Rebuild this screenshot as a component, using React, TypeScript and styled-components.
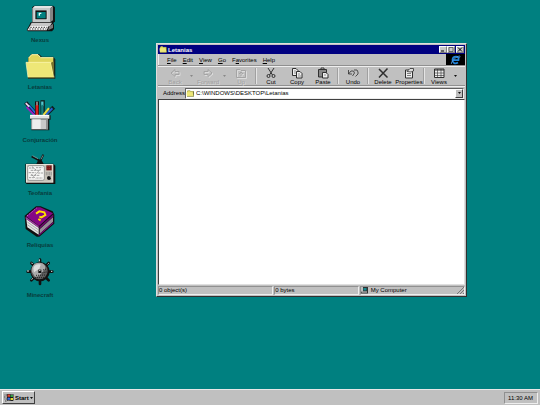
import React from "react";
import styled, { createGlobalStyle, css } from "styled-components";

const GlobalStyle = createGlobalStyle`
  * { box-sizing: border-box; }
  body {
    margin: 0;
    background: #008080;
    color: #000;
    font-family: "Liberation Sans", Arial, sans-serif;
    font-size: 6px;
    line-height: 8px;
  }
  button { font: inherit; color: inherit; background: none; border: 0; padding: 0; margin: 0; }
  svg { display: block; flex: none; }
`;

const raised = css`
  border: 1px solid;
  border-color: #fff #404040 #404040 #fff;
`;
const sunken = css`
  border: 1px solid;
  border-color: #909090 #eee #eee #909090;
`;

const Screen = styled.div`
  position: relative;
  height: 100vh;
  display: flex;
  flex-direction: column;
  overflow: hidden;
`;
const Desktop = styled.main`
  flex: 1;
  min-height: 0;
  padding: 5px 10px;
`;
const Shortcuts = styled.nav`
  display: flex;
  flex-direction: column;
  gap: 8px;
  width: 60px;
`;
const Shortcut = styled.a`
  display: flex;
  flex-direction: column;
  align-items: center;
  gap: 2px;
  color: #083c3c;
  font-size: 6px;
  font-weight: bold;
  line-height: 10px;
  text-decoration: none;
`;
const Window = styled.section`
  position: absolute;
  left: 156px;
  top: 43px;
  width: 311px;
  height: 254px;
  display: flex;
  flex-direction: column;
  padding: 1px;
  background: #c0c0c0;
  border: 1px solid;
  border-color: #dfdfdf #303030 #303030 #dfdfdf;
`;
const TitleBar = styled.header`
  display: flex;
  align-items: center;
  gap: 1px;
  height: 9px;
  padding: 0 1px;
  background: #000080;
  color: #fff;
  font-weight: bold;
`;
const Title = styled.h1`
  flex: 1;
  margin: 0;
  font-size: 6px;
`;
const Controls = styled.div`
  display: flex;
`;
const ControlButton = styled.button<{ $apart?: boolean }>`
  border: 1px solid;
  border-color: #fff #808080 #808080 #fff;
  width: 8px;
  height: 7px;
  margin-left: ${(p) => (p.$apart ? 1 : 0)}px;
  background: #c8c8c8;
`;
const MenuRow = styled.div`
  display: flex;
  height: 12px;
  border-bottom: 1px solid #909090;
`;
const Menu = styled.nav`
  flex: 1;
  display: flex;
  align-items: center;
  gap: 6px;
  padding-left: 8px;
  border-left: 1px solid #eee;
`;
const Throbber = styled.div`
  display: flex;
  align-items: center;
  justify-content: center;
  width: 19px;
  background: #000;
`;
const Toolbar = styled.div`
  display: flex;
  align-items: stretch;
  height: 20px;
  padding-left: 4px;
  border-top: 1px solid #eee;
  border-bottom: 1px solid #909090;
`;
const Tool = styled.button`
  display: flex;
  flex-direction: column;
  align-items: center;
  width: 26px;
  color: #000;
  line-height: 6px;
  &:disabled { color: #a0a0a0; text-shadow: 1px 1px 0 #d8d8d8; }
`;
const DropArrow = styled.button`
  display: flex;
  align-items: center;
  justify-content: center;
  width: 7px;
`;
const Divider = styled.span`
  width: 2px;
  margin: 1px;
  border-left: 1px solid #a0a0a0;
  border-right: 1px solid #e4e4e4;
`;
const AddressBar = styled.div`
  display: flex;
  align-items: center;
  height: 13px;
  padding: 0 1px 0 5px;
  border-top: 1px solid #eee;
`;
const AddressField = styled.div`
  border: 1px solid;
  border-color: #606060 #eee #eee #606060;
  flex: 1;
  display: flex;
  align-items: center;
  gap: 2px;
  height: 11px;
  background: #fff;
`;
const AddressInput = styled.input`
  flex: 1;
  min-width: 0;
  height: 8px;
  padding: 0;
  border: 0;
  outline: 0;
  background: none;
  font: inherit;
  color: #000;
`;
const AddressDrop = styled.button`
  ${raised}
  display: flex;
  align-items: center;
  justify-content: center;
  width: 8px;
  height: 9px;
  background: #c0c0c0;
`;
const FileArea = styled.div`
  flex: 1;
  background: #fff;
  border: 1px solid;
  border-color: #404040 #dfdfdf #dfdfdf #404040;
`;
const StatusBar = styled.footer`
  display: grid;
  grid-template-columns: 116fr 85fr 106fr;
  gap: 1px;
  height: 10px;
  padding-top: 1px;
`;
const StatusCell = styled.div`
  ${sunken}
  display: flex;
  align-items: center;
  gap: 2px;
  line-height: 7px;
`;
const Grip = styled.svg`
  margin-left: auto;
`;
const Taskbar = styled.footer`
  display: flex;
  align-items: center;
  justify-content: space-between;
  height: 16px;
  padding: 1px 2px;
  background: #c0c0c0;
  border-top: 1px solid #e8e8e8;
`;
const StartButton = styled.button`
  ${raised}
  display: flex;
  align-items: center;
  gap: 1px;
  height: 13px;
  padding: 0 1px;
  font-weight: bold;
`;
const Clock = styled.time`
  ${sunken}
  padding: 0 4px 0 3px;
  line-height: 10px;
`;

const ComputerIcon = () => (
  <svg width="32" height="28" viewBox="72 15 96 84" aria-hidden="true">
    <path d="M102 17H160L165 22V64L158 72H96V22Z" fill="#101818" />
    <path d="M98 24L104 18H158L152 24V65H98Z" fill="#e4e4e4" />
    <path d="M150 25L159 19V61L150 67Z" fill="#858585" />
    <path d="M98 24H150V66H98Z" fill="#c4c8c8" />
    <path d="M104 30H142V60H104Z" fill="#eee" />
    <path d="M106 31H140V58H106Z" fill="#101010" />
    <path d="M110 36H137V55H110Z" fill="#008080" />
    <path d="M116 38H124V42H120V47H116Z" fill="#e0ffff" />
    <path d="M92 67H158L162 74V87L156 94H84L80 90L88 76Z" fill="#101010" />
    <path d="M95 68H156L150 78H90Z" fill="#c8c8c8" />
    <path d="M90 78H146L140 91H82Z" fill="#f2f2f2" />
    <path d="M148 78L159 72V84L144 91Z" fill="#777" />
    <path d="M91 82H142M88 87H139" stroke="#333" strokeWidth="3" strokeDasharray="4 4" />
  </svg>
);

const FolderIcon = ({ width = 32, height = 27 }: { width?: number; height?: number }) => (
  <svg width={width} height={height} viewBox="72 159 96 81" aria-hidden="true">
    <path d="M84 174L94 162H117L126 170H160L166 178V236H84Z" fill="#182820" />
    <path d="M85 174L94 164H114L122 173H160V232H85Z" fill="#dfd65c" />
    <path d="M86 174L95 164H114L122 173H160" fill="none" stroke="#fffbb0" strokeWidth="3" />
    <path d="M78 187H152L162 232H84Z" fill="#eee777" stroke="#fffcc0" strokeWidth="2" />
    <path d="M153 188L162 232V184" fill="#77722d" />
    <path d="M84 233H163" stroke="#77722d" strokeWidth="3" />
  </svg>
);

const PencilCupIcon = () => (
  <svg width="32" height="33" viewBox="72 15 96 99" aria-hidden="true">
    <g strokeLinecap="square">
      <path d="M81 27L108 57" stroke="#101828" strokeWidth="12" />
      <path d="M82 38L102 59" stroke="#9820c0" strokeWidth="6" />
      <path d="M89 33L108 56" stroke="#2468e0" strokeWidth="5" />
      <path d="M79 26L86 33" stroke="#e8d8e8" strokeWidth="5" />
      <path d="M111 25V57" stroke="#181010" strokeWidth="12" />
      <path d="M111 34V57" stroke="#d82020" strokeWidth="8" />
      <path d="M111 22V29" stroke="#b4b4b4" strokeWidth="4" />
      <path d="M128 22V57" stroke="#102020" strokeWidth="13" />
      <path d="M127 23V30" stroke="#50c8d0" strokeWidth="7" />
      <path d="M127 33V56" stroke="#168080" strokeWidth="7" />
      <path d="M157 41L135 62" stroke="#102020" strokeWidth="12" />
      <path d="M155 42L140 57" stroke="#2460d0" strokeWidth="6" />
      <path d="M145 42L132 58" stroke="#e8d840" strokeWidth="6" />
    </g>
    <path d="M90 61H152V74H148V106H94V74H90Z" fill="#171f1f" />
    <path d="M90 60H148V71H90Z" fill="#e2e2e2" />
    <path d="M91 61H147" stroke="#fff" strokeWidth="3" />
    <path d="M94 73H144V103H94Z" fill="#c8c8c8" />
    <path d="M97 73H122V102H97Z" fill="#eee" />
    <path d="M138 73H144V103H138Z" fill="#909090" />
  </svg>
);

const TelevisionIcon = () => (
  <svg width="32" height="33" viewBox="72 174 96 99" aria-hidden="true">
    <path d="M95 184L119 197M130 179L119 202" stroke="#111" strokeWidth="6" />
    <path d="M97 182L114 191M129 181L123 193" stroke="#9bb" strokeWidth="2" />
    <path d="M109 207L114 196H125L131 207Z" fill="#111" />
    <path d="M78 206H160L166 212V267H80L76 263V208Z" fill="#111" />
    <path d="M78 207H160V263H78Z" fill="#e8e4da" />
    <path d="M81 210H157V260H81Z" fill="#c8c4ba" />
    <rect x="83" y="212" width="50" height="44" rx="5" fill="#f7f7f5" stroke="#777" strokeWidth="2" />
    <path d="M87 219H101M108 218H127M92 226H121M86 233H107M113 234H129M92 241H120M87 248H102M109 249H128M96 215L111 227M122 222L102 243M94 237L107 251" stroke="#777" strokeWidth="2" strokeDasharray="7 2" />
    <path d="M139 211H155V226H139Z" fill="#701818" />
    <path d="M142 215H152M142 221H152" stroke="#c03828" strokeWidth="2" strokeDasharray="3 2" />
    <path d="M139 231V241M144 231V241M149 231V241M154 231V241" stroke="#858585" strokeWidth="2" />
    <circle cx="147" cy="249" r="6" fill="#111" />
    <path d="M150 245L153 248" stroke="#fff" strokeWidth="2" />
  </svg>
);

const BookIcon = () => (
  <svg width="32" height="32" viewBox="72 18 96 96" aria-hidden="true">
    <path d="M74 47L108 19H122L158 34L163 44V71L118 110H110L77 87Z" fill="#101010" />
    <path d="M78 49L110 22H121L159 40L117 78Z" fill="#850785" />
    <path d="M79 57L116 83V104L82 82Z" fill="#e4e4e4" />
    <path d="M82 66L116 90M82 74L116 98" stroke="#909090" strokeWidth="2" />
    <path d="M77 50L116 78V83L77 56Z" fill="#a040a0" />
    <path d="M118 80L160 43V50L118 87Z" fill="#6a086a" />
    <path d="M119 88L159 52V65L119 101Z" fill="#9a8a9a" />
    <path d="M116 104L160 66V70L116 108Z" fill="#850785" />
    <path d="M81 48L110 24" stroke="#d060d0" strokeWidth="3" strokeDasharray="4 3" />
    <path d="M108 41L118 34L133 37L136 45L124 52L118 50M115 57L122 61" fill="none" stroke="#ffe000" strokeWidth="6" />
  </svg>
);

const MineIcon = () => (
  <svg width="32" height="30" viewBox="72 174 96 90" aria-hidden="true">
    <path d="M120 179V252M83 215H157M94 189L146 241M146 189L94 241" stroke="#101010" strokeWidth="8" strokeLinecap="round" />
    <circle cx="120" cy="215" r="29" fill="#111" />
    <circle cx="118" cy="213" r="25" fill="#5d5d5d" />
    <path d="M96 216C92 195 108 185 123 189C138 193 139 205 131 212C124 219 120 231 105 230Z" fill="#aaa" />
    <path d="M100 205C102 195 112 191 122 194L118 206L102 217Z" fill="#ddd" />
    <path d="M105 233L136 233M108 226L139 225M125 219L140 216M129 210L140 207" stroke="#202020" strokeWidth="3" strokeDasharray="3 3" />
    <path d="M115 209H124V219H115Z" fill="#111" />
    <path d="M118 210H121V213H118Z" fill="#fff" />
    <path d="M118 178V184M81 213H87M94 188L98 192M146 190L143 193M153 214H157M98 235L95 239" stroke="#d8eeee" strokeWidth="3" />
  </svg>
);

type ToolName = "back" | "forward" | "up" | "cut" | "copy" | "paste" | "undo" | "delete" | "properties" | "views";

const toolArt: Record<ToolName, React.ReactNode> = {
  back: <path d="M2 6L6 2.500V4.500H10V7.500H6V9.500Z" />,
  forward: <path d="M10 6L6 2.500V4.500H2V7.500H6V9.500Z" />,
  up: <path d="M1.500 2.500H5L6 3.500H10.500V10.500H1.500ZM6 9V5M4 7L6 5L8 7" />,
  cut: (
    <>
      <path d="M3 1L7.500 8M9 1L4.500 8" />
      <circle cx="3.500" cy="9" r="1.500" />
      <circle cx="8.500" cy="9" r="1.500" />
    </>
  ),
  copy: (
    <>
      <path d="M1.500 1.500H5L7 3.500V8.500H1.500Z" fill="#eee" />
      <path d="M5.500 4.500H9L11 6.500V11H5.500Z" fill="#eee" />
      <path d="M3 4H5M3 6H5M7 7H9M7 9H10" strokeWidth=".5" />
    </>
  ),
  paste: (
    <>
      <path d="M1.500 2.500H9.500V10H1.500Z" fill="#888" />
      <path d="M4 2.500V1H7V2.500Z" fill="#ddd" />
      <path d="M5.500 5.500H9L11 7.500V11H5.500Z" fill="#eee" />
      <path d="M7 8H9" strokeWidth=".5" />
    </>
  ),
  undo: <path d="M1.500 3V7H5M1.500 7L4 4H6.500L7.500 6L5.500 9M7 3H10L11 5V7L8.500 9.500" strokeWidth=".8" />,
  delete: <path d="M2 2L10.500 10.500M10.500 1.500L2 10.500" strokeWidth="1.500" />,
  properties: (
    <>
      <path d="M2.500 3H9.500V11H2.500Z" fill="#eee" />
      <path d="M4 6.500H8M4 8.500H8" strokeWidth=".6" />
      <path d="M4 4.500L7 1.500H10.500V4L8 5Z" fill="#ddd" strokeWidth=".8" />
    </>
  ),
  views: (
    <>
      <path d="M1.500 2H11V10.500H1.500Z" fill="#eee" />
      <path d="M1.500 3H11" />
      <path d="M1.500 6H11M1.500 8.500H11M4.500 2V10.500M8 2V10.500" strokeWidth=".6" />
    </>
  ),
};

const ToolIcon = ({ name, muted }: { name: ToolName; muted?: boolean }) => (
  <svg width="12" height="12" viewBox="0 0 12 12" fill="none" stroke={muted ? "#a4a4a4" : "#303030"} aria-hidden="true">
    {muted && <g stroke="#dcdcdc" transform="translate(1 1)">{toolArt[name]}</g>}
    {toolArt[name]}
  </svg>
);

const ArrowIcon = ({ color = "#111" }: { color?: string }) => (
  <svg width="3" height="2" viewBox="0 0 3 2" aria-hidden="true">
    <path d="M0 0H3L1.500 2Z" fill={color} />
  </svg>
);

const ExplorerIcon = () => (
  <svg width="11" height="10" viewBox="0 0 22 20" fill="none" aria-hidden="true">
    <path d="M16 15C10 19 5 16 5 10C5 5 8 3 12 3C16 3 18 6 17 10H7" stroke="#2484d8" strokeWidth="3.500" />
    <path d="M3 18C1 14 12 3 19 2C21 2 20 5 18 6" stroke="#60a8f0" strokeWidth="1.500" />
  </svg>
);

const MiniComputerIcon = () => (
  <svg width="8" height="7" viewBox="0 0 16 14" aria-hidden="true">
    <path d="M4 0H14V9H4ZM1 9H14V13H0Z" fill="#333" />
    <path d="M5 2H11V7H5Z" fill="#158b90" />
    <path d="M2 10H12" stroke="#ddd" strokeWidth="2" />
  </svg>
);

const FlagIcon = () => (
  <svg width="10" height="9" viewBox="0 0 20 18" aria-hidden="true">
    <path d="M6 3C10 0 14 5 19 2V15C14 18 11 13 6 16Z" fill="#181818" />
    <path d="M7 4C9 2 11 2 12 4V8C11 7 9 7 7 8Z" fill="#e04030" />
    <path d="M13 4L18 4V8L13 8Z" fill="#35a045" />
    <path d="M7 10C9 8 11 9 12 10V14C11 13 9 13 7 14Z" fill="#3468e0" />
    <path d="M13 10L18 10V14L13 14Z" fill="#e8d830" />
    <path d="M1 4H6M0 8H6M1 12H6M2 16H6" stroke="#444" strokeWidth="2" strokeDasharray="2 1" />
  </svg>
);

const shortcuts = [
  { label: "Nexus", icon: <ComputerIcon /> },
  { label: "Letanias", icon: <FolderIcon /> },
  { label: "Conjuración", icon: <PencilCupIcon /> },
  { label: "Teofania", icon: <TelevisionIcon /> },
  { label: "Reliquias", icon: <BookIcon /> },
  { label: "Minecraft", icon: <MineIcon /> },
];

const menus = [
  ["", "F", "ile"],
  ["", "E", "dit"],
  ["", "V", "iew"],
  ["", "G", "o"],
  ["F", "a", "vorites"],
  ["", "H", "elp"],
];

const ToolButton = ({ name, label, disabled }: { name: ToolName; label: string; disabled?: boolean }) => (
  <Tool type="button" disabled={disabled}>
    <ToolIcon name={name} muted={disabled} />
    {label}
  </Tool>
);

export default function App() {
  return (
    <Screen>
      <GlobalStyle />
      <Desktop>
        <Shortcuts aria-label="Desktop">
          {shortcuts.map((s) => (
            <Shortcut key={s.label} href="#">
              {s.icon}
              {s.label}
            </Shortcut>
          ))}
        </Shortcuts>
        <Window aria-label="Letanias">
          <TitleBar>
            <FolderIcon width={8} height={7} />
            <Title>Letanias</Title>
            <Controls>
              <ControlButton type="button" aria-label="Minimize">
                <svg width="6" height="5" viewBox="0 0 6 5"><path d="M1 4H4" stroke="#000" /></svg>
              </ControlButton>
              <ControlButton type="button" aria-label="Maximize">
                <svg width="6" height="5" viewBox="0 0 6 5"><path d="M1 .5H5V4.500H1Z" fill="none" stroke="#444" strokeWidth=".7" /></svg>
              </ControlButton>
              <ControlButton type="button" aria-label="Close" $apart>
                <svg width="6" height="5" viewBox="0 0 6 5"><path d="M1 .5L5 4.500M5 .5L1 4.500" stroke="#000" /></svg>
              </ControlButton>
            </Controls>
          </TitleBar>
          <MenuRow>
            <Menu aria-label="Menu">
              {menus.map(([before, key, after]) => (
                <button type="button" key={key}>
                  {before}<u>{key}</u>{after}
                </button>
              ))}
            </Menu>
            <Throbber><ExplorerIcon /></Throbber>
          </MenuRow>
          <Toolbar role="toolbar" aria-label="Standard buttons">
            <ToolButton name="back" label="Back" disabled />
            <DropArrow type="button" aria-label="Back history"><ArrowIcon color="#888" /></DropArrow>
            <ToolButton name="forward" label="Forward" disabled />
            <DropArrow type="button" aria-label="Forward history"><ArrowIcon color="#888" /></DropArrow>
            <ToolButton name="up" label="Up" disabled />
            <Divider />
            <ToolButton name="cut" label="Cut" />
            <ToolButton name="copy" label="Copy" />
            <ToolButton name="paste" label="Paste" />
            <Divider />
            <ToolButton name="undo" label="Undo" />
            <Divider />
            <ToolButton name="delete" label="Delete" />
            <ToolButton name="properties" label="Properties" />
            <Divider />
            <ToolButton name="views" label="Views" />
            <DropArrow type="button" aria-label="View options"><ArrowIcon /></DropArrow>
          </Toolbar>
          <AddressBar>
            <label htmlFor="address">Address</label>
            <AddressField>
              <FolderIcon width={8} height={7} />
              <AddressInput id="address" defaultValue={"C:\\WINDOWS\\DESKTOP\\Letanias"} />
              <AddressDrop type="button" aria-label="Show addresses"><ArrowIcon /></AddressDrop>
            </AddressField>
          </AddressBar>
          <FileArea />
          <StatusBar>
            <StatusCell>0 object(s)</StatusCell>
            <StatusCell>0 bytes</StatusCell>
            <StatusCell>
              <MiniComputerIcon />
              My Computer
              <Grip width="7" height="7" viewBox="0 0 7 7" aria-hidden="true">
                <path d="M0 7L7 0M3 7L7 3M6 7L7 6" stroke="#777" />
              </Grip>
            </StatusCell>
          </StatusBar>
        </Window>
      </Desktop>
      <Taskbar>
        <StartButton type="button">
          <FlagIcon />
          Start
          <ArrowIcon />
        </StartButton>
        <Clock>11:30 AM</Clock>
      </Taskbar>
    </Screen>
  );
}
